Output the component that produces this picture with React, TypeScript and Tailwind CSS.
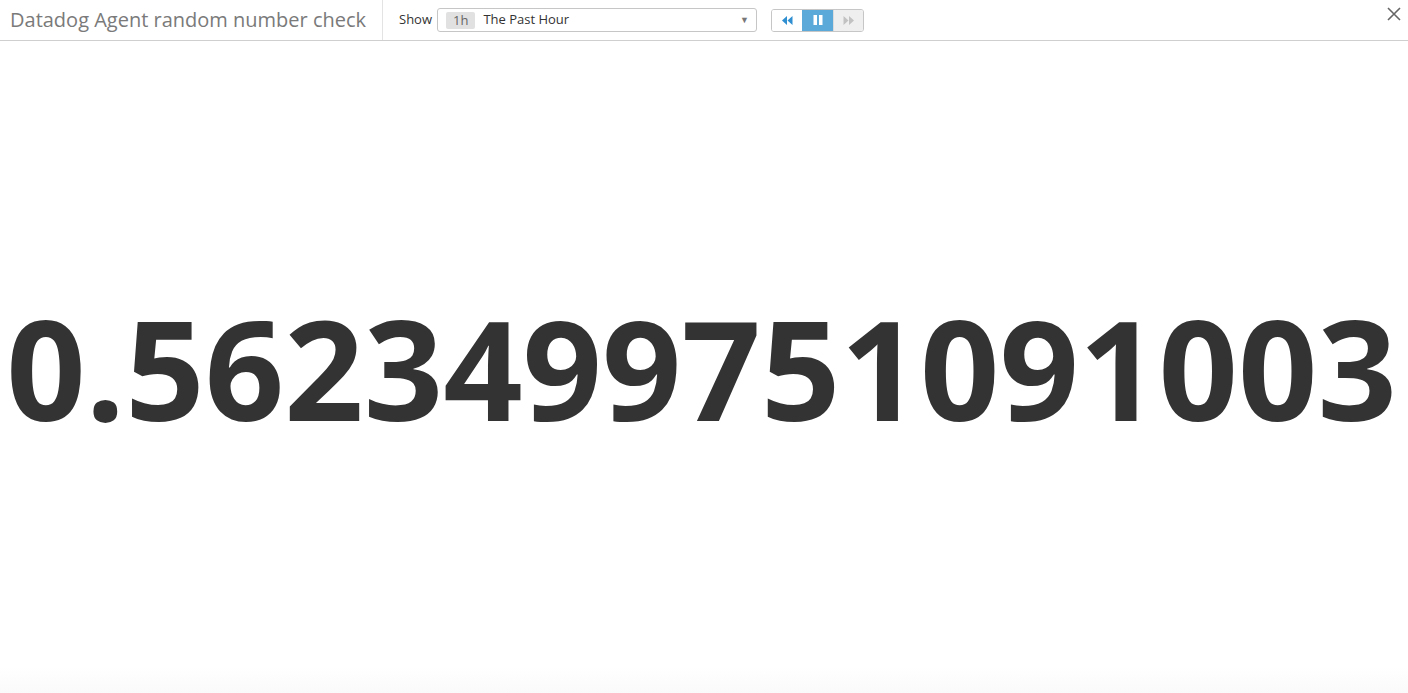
import React from 'react';

const font = { fontFamily: '"Open Sans", "Liberation Sans", sans-serif' };

const App = () => {
  return (
    <div className="h-[693px] w-[1408px] overflow-hidden bg-white flex flex-col" style={font}>
      {/* header */}
      <div className="h-[41px] flex items-stretch border-b border-[#cfcfcf] shrink-0">
        <div className="w-[383px] border-r border-[#e3e3e3] pl-[10px] flex items-center">
          <span className="text-[20px] text-[#7a7a7a] leading-none">Datadog Agent random number check</span>
        </div>
        <div className="flex items-center pl-[16px]">
          <span className="text-[13px] text-[#333] mr-[5px]">Show</span>
          <div className="w-[320px] h-[24px] border border-[#c6c6c6] rounded-[3px] flex items-center pl-[8px] pr-[7px]">
            <span className="bg-[#e1e1e1] text-[#666] text-[13px] leading-[17px] px-[7px] rounded-[2px]">1h</span>
            <span className="ml-[8px] text-[13px] text-[#333]">The Past Hour</span>
            <span className="ml-auto text-[9px] text-[#777]">▼</span>
          </div>
          <div className="ml-[14px] h-[23px] flex border border-[#c6c6c6] rounded-[3px] overflow-hidden">
            <div className="w-[30px] flex items-center justify-center bg-white">
              <svg width="11" height="9" viewBox="0 0 11 9">
                <path d="M5 0 L0 4.5 L5 9 Z M10.5 0 L5.5 4.5 L10.5 9 Z" fill="#2f8fd0" />
              </svg>
            </div>
            <div className="w-[31px] flex items-center justify-center bg-[#5aa9d9]">
              <svg width="10" height="10" viewBox="0 0 10 10">
                <rect x="0.5" y="0" width="3.5" height="10" fill="#fff" />
                <rect x="6" y="0" width="3.5" height="10" fill="#fff" />
              </svg>
            </div>
            <div className="w-[30px] flex items-center justify-center bg-[#efefef] border-l border-[#dcdcdc]">
              <svg width="11" height="9" viewBox="0 0 11 9">
                <path d="M0.5 0 L5.5 4.5 L0.5 9 Z M6 0 L11 4.5 L6 9 Z" fill="#c2c2c2" />
              </svg>
            </div>
          </div>
        </div>
        <div className="ml-auto pr-[7px] pt-[7px]">
          <svg width="14" height="14" viewBox="0 0 14 14">
            <path d="M1 1 L13 13 M13 1 L1 13" stroke="#666" strokeWidth="1.6" />
          </svg>
        </div>
      </div>

      {/* value */}
      <div className="flex-1 flex items-center justify-center pr-[5px] bg-gradient-to-b from-white from-[96%] to-[#fafafa]">
        <span className="text-[139px] font-bold text-[#333] leading-none">0.5623499751091003</span>
      </div>
    </div>
  );
};

export default App;
